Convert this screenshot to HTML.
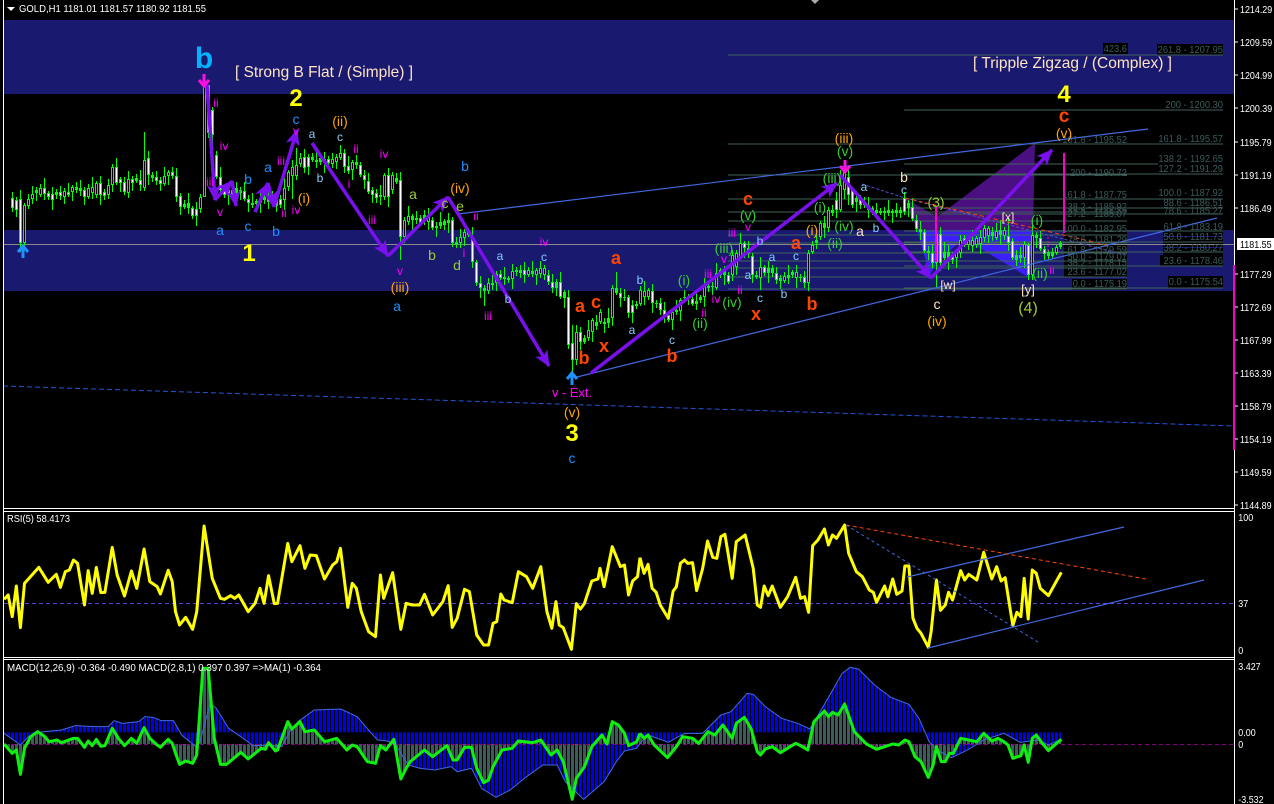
<!DOCTYPE html>
<html><head><meta charset="utf-8"><title>GOLD,H1</title>
<style>
html,body{margin:0;padding:0;background:#000;width:1274px;height:804px;overflow:hidden}
svg{display:block;font-family:"Liberation Sans",Arial,sans-serif}
.m{fill:#f0f;font-size:12px}.l{fill:#87cefa;font-size:12px}.d{fill:#1e90ff;font-size:14px}
.o{fill:#ffa500;font-size:14px}.g{fill:#32cd32;font-size:14px}.y{fill:#9acd32;font-size:14px}
.r{fill:#ff4500;font-size:18px;font-weight:bold}.w{fill:#ffe4c4;font-size:14px}
.Y{fill:#ff0;font-size:24px;font-weight:bold}
.c text{text-anchor:middle}
.ax{fill:#fff;font-size:10.5px}
.f{fill:#3c5c5c;font-size:10.5px;text-anchor:end}
polyline{vector-effect:non-scaling-stroke}
</style></head><body>
<svg width="1274" height="804" viewBox="0 0 1274 804" xmlns="http://www.w3.org/2000/svg">
<defs>
<marker id="ah" markerUnits="userSpaceOnUse" markerWidth="18" markerHeight="16" refX="15" refY="7" orient="auto"><path d="M0 0L16 7L0 14L4 7Z" fill="#7a10ee"/></marker>
<pattern id="pb" patternUnits="userSpaceOnUse" width="4" height="4"><rect x="0" y="0" width="2" height="4" fill="#0000f0"/><rect x="3" y="0" width="1" height="4" fill="#0000f0"/></pattern>
<pattern id="pg" patternUnits="userSpaceOnUse" width="4" height="4"><rect x="0" y="0" width="2" height="4" fill="#3c5c5c"/><rect x="3" y="0" width="1" height="4" fill="#3c5c5c"/></pattern>
<clipPath id="cb">
<polygon transform="translate(0,505) scale(.40816,.33333)" points="10,685 50,720 70,695 92,682 150,675 185,662 230,665 265,665 280,647 300,655 340,650 355,635 375,637 395,647 425,647 445,690 480,725 490,710 515,595 530,610 560,670 590,695 620,722 660,720 690,725 710,680 730,650 770,615 835,612 875,635 910,685 925,705 950,708 970,720 1000,780 1030,790 1065,795 1105,785 1120,800 1155,790 1180,850 1215,877 1250,855 1290,815 1330,780 1365,780 1385,830 1430,883 1480,830 1510,770 1530,738 1560,730 1568,720 1568,682 10,682"/>
<polygon transform="translate(640,505) scale(.40437,.33333)" points="0,715 20,690 70,712 110,685 155,685 200,630 225,620 265,565 280,568 310,605 350,640 390,655 420,672 460,590 500,505 520,487 540,492 580,540 620,577 665,598 690,640 715,710 735,735 770,758 810,735 850,705 900,685 940,712 985,705 1010,720 1042,703 1042,682 0,682"/>
</clipPath>
<clipPath id="cg">
<polygon transform="translate(0,505) scale(.40816,.33333)" points="10,717 30,745 40,735 50,808 60,730 75,695 92,680 110,695 120,710 140,705 150,713 180,700 190,700 207,727 216,708 226,722 236,703 247,724 257,722 275,670 290,700 305,722 322,700 335,715 353,668 367,700 385,720 393,727 412,703 422,715 430,745 440,778 455,768 472,775 482,750 497,490 510,490 525,700 540,778 555,778 590,742 608,762 640,730 650,733 658,713 675,738 680,735 705,650 715,672 735,650 747,680 770,675 795,710 825,700 850,735 863,720 875,725 900,770 920,775 932,722 945,735 965,703 982,822 995,790 1005,770 1040,735 1060,755 1095,722 1110,765 1120,765 1138,727 1155,727 1168,790 1185,833 1197,825 1208,785 1230,735 1255,730 1270,708 1305,713 1325,705 1350,750 1365,735 1380,770 1402,883 1412,820 1432,785 1450,725 1475,690 1487,717 1500,650 1515,660 1530,685 1540,722 1560,710 1568,690 1568,717 10,717"/>
<polygon transform="translate(640,505) scale(.40437,.33333)" points="0,685 10,700 20,690 35,720 68,758 90,725 105,695 130,700 145,715 168,680 185,690 205,660 228,700 238,655 258,637 275,672 290,740 298,750 310,732 327,725 347,743 365,730 385,715 397,722 415,735 430,650 456,618 466,635 476,622 490,630 506,597 530,680 560,717 585,733 605,725 625,717 640,720 655,705 665,710 680,755 695,770 713,817 725,780 733,725 745,770 755,770 765,745 775,745 793,700 813,705 833,710 850,685 870,708 885,700 900,710 910,720 922,760 942,752 950,720 960,772 970,700 980,690 995,715 1010,737 1030,715 1042,703 1042,717 0,717"/>
</clipPath>
</defs>
<rect width="1274" height="804" fill="#000"/>
<!-- zones -->
<rect x="4" y="20" width="1230" height="74" fill="#191970"/>
<rect x="4" y="230" width="1230" height="61" fill="#191970"/>
<!-- purple -->
<polygon points="1035,143 1033,230 917,230 905,198 937,217" fill="#4a0f80"/>
<polygon points="917,230 1033,230 1028,277 978,247 962,240 937,262 930,275" fill="#3b1fff"/>
<!-- label boxes -->
<g fill="#000">
<rect x="1103" y="43" width="25" height="11"/><rect x="1157" y="44" width="66" height="11"/>
<rect x="1163" y="226" width="60" height="10"/><rect x="1163" y="237" width="60" height="10"/><rect x="1163" y="248" width="60" height="10"/><rect x="1160" y="255" width="63" height="11"/><rect x="1168" y="276" width="55" height="12"/>
<rect x="1064" y="230" width="63" height="47"/><rect x="1072" y="279" width="55" height="11"/>
</g>
<!-- fib lines -->
<g stroke="#40625a" stroke-width="1" shape-rendering="crispEdges">
<path d="M728 55H1127M728 144H1127M728 175H1127M728 199H1127M728 212H1127M728 221H1127M728 235H1127M728 243H1127M728 253H1127M728 261H1127M728 268H1127M728 277H1127M728 289H1127"/>
<path d="M904 55H1223M904 110H1223M904 144H1223M904 164H1158M904 174H1223M904 199H1223M904 208H1223M904 214H1223M904 231H1223M904 242H1223M904 252H1223M904 266H1223M904 288H1223"/>
</g>
<path d="M4 244.5H1234" stroke="#8a8a8a" stroke-width="1"/>
<!-- candles: wicks -->
<path fill="none" stroke="#00ff00" stroke-width="1" d="M12.5 192V212M16.5 197V217M20.5 190V252M24.5 203V250M28.5 194V209M32.5 186V204M36.5 187V201M40.5 184V197M44.5 178V200M48.5 191V200M52.5 187V210M56.5 189V199M60.5 186V200M64.5 188V204M68.5 183V197M72.5 185V201M76.5 182V193M80.5 180V196M84.5 187V205M88.5 184V199M92.5 177V199M96.5 181V198M100.5 176V205M104.5 189V200M108.5 179V199M112.5 164V192M116.5 158V185M120.5 177V192M124.5 177V195M128.5 171V198M132.5 176V191M136.5 174V183M140.5 170V191M144.5 132V191M148.5 151V185M152.5 172V182M156.5 171V185M160.5 177V191M164.5 167V186M168.5 170V185M172.5 167V179M176.5 168V202M180.5 193V215M184.5 200V209M188.5 193V214M192.5 206V219M196.5 202V226M200.5 194V213M204.5 85V197M208.5 85V138M212.5 107V172M216.5 151V179M220.5 167V196M224.5 188V198M228.5 183V205M232.5 187V199M236.5 182V197M240.5 187V200M244.5 182V201M248.5 195V212M252.5 193V208M256.5 199V209M260.5 191V213M264.5 194V204M268.5 190V209M272.5 191V206M276.5 197V212M280.5 195V208M284.5 178V210M288.5 170V191M292.5 160V199M296.5 148V180M300.5 153V167M304.5 149V173M308.5 154V175M312.5 153V162M316.5 150V168M320.5 156V165M324.5 152V173M328.5 156V167M332.5 153V168M336.5 154V169M340.5 145V160M344.5 149V173M348.5 156V174M352.5 160V180M356.5 155V169M360.5 162V177M364.5 170V189M368.5 173V194M372.5 187V203M376.5 189V203M380.5 185V205M384.5 173V200M388.5 168V207M392.5 172V194M396.5 173V184M400.5 172V260M404.5 217V243M408.5 206V225M412.5 214V230M416.5 211V224M420.5 215V226M424.5 210V225M428.5 208V230M432.5 217V230M436.5 222V237M440.5 212V229M444.5 219V230M448.5 213V233M452.5 217V247M456.5 237V248M460.5 229V248M464.5 229V246M468.5 228V237M472.5 227V268M476.5 260V286M480.5 276V298M484.5 285V306M488.5 278V294M492.5 275V290M496.5 271V291M500.5 270V280M504.5 267V285M508.5 276V283M512.5 264V289M516.5 267V276M520.5 265V278M524.5 262V283M528.5 267V277M532.5 261V277M536.5 268V285M540.5 261V278M544.5 265V280M548.5 270V285M552.5 274V293M556.5 279V296M560.5 272V299M564.5 290V308M568.5 290V349M572.5 325V375M576.5 325V365M580.5 327V350M584.5 335V344M588.5 320V341M592.5 318V342M596.5 315V330M600.5 309V324M604.5 318V333M608.5 308V328M612.5 285V326M616.5 272V295M620.5 288V307M624.5 289V301M628.5 295V318M632.5 300V323M636.5 301V309M640.5 286V306M644.5 281V305M648.5 288V300M652.5 284V313M656.5 300V308M660.5 298V315M664.5 302V323M668.5 312V322M672.5 308V330M676.5 300V315M680.5 298V321M684.5 290V302M688.5 294V305M692.5 295V306M696.5 291V310M700.5 295V303M704.5 278V307M708.5 283V292M712.5 282V295M716.5 263V290M720.5 268V278M724.5 266V285M728.5 272V284M732.5 250V281M736.5 250V275M740.5 233V259M744.5 241V258M748.5 241V258M752.5 253V283M756.5 271V279M760.5 257V290M764.5 265V276M768.5 261V283M772.5 265V277M776.5 267V284M780.5 275V289M784.5 272V283M788.5 265V284M792.5 270V278M796.5 265V288M800.5 274V282M804.5 271V288M808.5 250V291M812.5 241V254M816.5 230V249M820.5 221V240M824.5 216V238M828.5 207V232M832.5 205V216M836.5 192V218M840.5 170V212M844.5 160V199M848.5 167V205M852.5 188V208M856.5 191V212M860.5 195V209M864.5 197V208M868.5 197V218M872.5 206V215M876.5 203V219M880.5 208V215M884.5 207V220M888.5 200V216M892.5 209V223M896.5 203V217M900.5 207V218M904.5 192V215M908.5 200V217M912.5 198V221M916.5 215V232M920.5 221V240M924.5 229V253M928.5 246V260M932.5 245V268M936.5 207V288M940.5 227V271M944.5 242V260M948.5 245V270M952.5 252V264M956.5 250V268M960.5 235V258M964.5 235V247M968.5 236V250M972.5 230V252M976.5 236V248M980.5 230V254M984.5 225V242M988.5 226V243M992.5 227V241M996.5 223V240M1000.5 220V245M1004.5 227V240M1008.5 218V251M1012.5 238V260M1016.5 250V266M1020.5 247V263M1024.5 241V268M1028.5 243V280M1032.5 225V280M1036.5 232V248M1040.5 231V251M1044.5 246V260M1048.5 250V259M1052.5 248V258M1056.5 245V255M1060.5 241V249"/>
<!-- candles: bodies -->
<path fill="none" stroke="#00ff00" stroke-width="3" d="M12.5 198V208M16.5 200V210M20.5 199V243M24.5 205V243M28.5 199V206M32.5 194V199M36.5 190V193M40.5 188V195M44.5 188V194M48.5 193V197M52.5 194V200M56.5 192V195M60.5 192V196M64.5 191V197M68.5 192V195M72.5 187V192M76.5 187V190M80.5 188V191M84.5 190V197M88.5 188V197M92.5 187V193M96.5 183V195M100.5 183V195M104.5 192V196M108.5 185V195M112.5 167V185M116.5 167V183M120.5 179V183M124.5 182V192M128.5 179V193M132.5 179V183M136.5 178V181M140.5 180V185M144.5 160V188M148.5 158V175M152.5 175V178M156.5 177V181M160.5 180V184M164.5 176V184M168.5 172V176M172.5 172V176M176.5 176V197M180.5 196V207M184.5 204V207M188.5 203V208M192.5 208V216M196.5 209V216M200.5 197V209M204.5 85V197M208.5 85V133M212.5 110V135M216.5 155V177M220.5 177V190M224.5 190V195M228.5 190V195M232.5 190V195M236.5 188V193M240.5 190V193M244.5 191V199M248.5 199V203M252.5 203V205M256.5 201V204M260.5 198V203M264.5 197V200M268.5 195V202M272.5 199V204M276.5 200V206M280.5 199V205M284.5 188V200M288.5 172V187M292.5 167V176M296.5 165V176M300.5 158V164M304.5 157V168M308.5 157V167M312.5 157V160M316.5 160V162M320.5 158V162M324.5 159V163M328.5 159V163M332.5 159V164M336.5 157V162M340.5 153V158M344.5 153V167M348.5 166V171M352.5 162V170M356.5 162V165M360.5 165V175M364.5 175V180M368.5 181V192M372.5 190V195M376.5 193V198M380.5 195V197M384.5 175V197M388.5 175V197M392.5 175V190M396.5 178V182M400.5 180V237M404.5 220V237M408.5 216V222M412.5 216V220M416.5 218V220M420.5 218V224M424.5 215V220M428.5 216V222M432.5 220V228M436.5 226V228M440.5 222V226M444.5 221V225M448.5 220V223M452.5 220V243M456.5 242V245M460.5 237V243M464.5 232V238M468.5 232V235M472.5 237V262M476.5 262V283M480.5 283V288M484.5 288V291M488.5 283V291M492.5 283V285M496.5 274V283M500.5 274V278M504.5 277V279M508.5 278V280M512.5 271V279M516.5 270V272M520.5 270V273M524.5 270V275M528.5 270V275M532.5 271V274M536.5 270V275M540.5 268V274M544.5 268V275M548.5 275V282M552.5 282V288M556.5 282V288M560.5 282V297M564.5 292V298M568.5 297V345M572.5 343V360M576.5 332V360M580.5 332V342M584.5 338V342M588.5 330V338M592.5 320V332M596.5 322V326M600.5 312V322M604.5 322V324M608.5 318V323M612.5 288V318M616.5 288V293M620.5 293V298M624.5 297V298M628.5 297V313M632.5 305V313M636.5 304V306M640.5 290V304M644.5 291V297M648.5 290V297M652.5 291V303M656.5 303V304M660.5 303V310M664.5 310V315M668.5 315V320M672.5 312V320M676.5 310V312M680.5 300V311M684.5 297V298M688.5 297V298M692.5 299V304M696.5 301V304M700.5 297V300M704.5 285V297M708.5 286V288M712.5 286V287M716.5 273V288M720.5 270V275M724.5 271V275M728.5 275V282M732.5 255V275M736.5 253V267M740.5 243V257M744.5 243V248M748.5 248V254M752.5 256V275M756.5 275V277M760.5 267V278M764.5 267V273M768.5 268V273M772.5 268V273M776.5 273V280M780.5 278V281M784.5 276V281M788.5 275V278M792.5 272V275M796.5 272V278M800.5 277V278M804.5 277V283M808.5 253V283M812.5 245V252M816.5 240V243M820.5 223V237M824.5 223V228M828.5 210V228M832.5 210V213M836.5 200V210M840.5 185V210M844.5 170V190M848.5 177V195M852.5 190V205M856.5 198V202M860.5 198V205M864.5 202V205M868.5 205V210M872.5 208V212M876.5 210V213M880.5 211V213M884.5 211V213M888.5 210V213M892.5 211V213M896.5 210V213M900.5 210V213M904.5 198V212M908.5 203V208M912.5 207V219M916.5 220V229M920.5 229V232M924.5 232V251M928.5 251V253M932.5 253V263M936.5 234V263M940.5 234V263M944.5 252V258M948.5 252V260M952.5 255V260M956.5 252V258M960.5 240V253M964.5 238V245M968.5 240V245M972.5 240V246M976.5 238V245M980.5 237V244M984.5 228V238M988.5 228V236M992.5 232V236M996.5 231V238M1000.5 230V235M1004.5 230V236M1008.5 236V243M1012.5 241V258M1016.5 255V260M1020.5 255V258M1024.5 244V258M1028.5 245V275M1032.5 235V275M1036.5 235V238M1040.5 238V249M1044.5 249V254M1048.5 252V256M1052.5 252V256M1056.5 247V253M1060.5 243V247"/>
<!-- candles: white interiors -->
<path fill="none" stroke="#fff" stroke-width="1" d="M12.5 199V207M16.5 201V209M20.5 200V242M44.5 189V193M48.5 194V196M52.5 195V199M60.5 193V195M68.5 193V194M84.5 191V196M100.5 184V194M104.5 193V195M116.5 168V182M120.5 180V182M124.5 183V191M132.5 180V182M140.5 181V184M148.5 159V174M156.5 178V180M160.5 181V183M172.5 173V175M176.5 177V196M180.5 197V206M192.5 209V215M196.5 210V215M208.5 86V132M212.5 111V134M216.5 156V176M220.5 178V189M224.5 191V194M228.5 191V194M232.5 191V194M244.5 192V198M248.5 200V202M268.5 196V201M276.5 201V205M280.5 200V204M304.5 158V167M308.5 158V166M324.5 160V162M328.5 160V162M344.5 154V166M348.5 167V170M360.5 166V174M364.5 176V179M368.5 182V191M372.5 191V194M376.5 194V197M388.5 176V196M400.5 181V236M420.5 219V223M432.5 221V227M452.5 221V242M472.5 238V261M476.5 263V282M480.5 284V287M500.5 275V277M524.5 271V274M548.5 276V281M552.5 283V287M560.5 283V296M568.5 298V344M572.5 344V359M580.5 333V341M620.5 294V297M628.5 298V312M632.5 306V312M652.5 292V302M660.5 304V309M664.5 311V314M668.5 316V319M692.5 300V303M720.5 271V274M728.5 276V281M744.5 244V247M748.5 249V253M752.5 257V274M764.5 268V272M776.5 274V279M804.5 278V282M836.5 201V209M848.5 178V194M852.5 191V204M860.5 199V204M868.5 206V209M904.5 199V211M912.5 208V218M916.5 221V228M924.5 233V250M932.5 254V262M940.5 235V262M952.5 256V259M964.5 239V244M1008.5 237V242M1012.5 242V257M1028.5 246V274M1040.5 239V248M1044.5 250V253"/>
<!-- candles: black interiors -->
<path fill="none" stroke="#000" stroke-width="1" d="M24.5 206V242M28.5 200V205M32.5 195V198M40.5 189V194M64.5 192V196M72.5 188V191M88.5 189V196M92.5 188V192M96.5 184V194M108.5 186V194M112.5 168V184M128.5 180V192M144.5 161V187M164.5 177V183M168.5 173V175M200.5 198V208M204.5 86V196M284.5 189V199M288.5 173V186M292.5 168V175M296.5 166V175M300.5 159V163M332.5 160V163M336.5 158V161M340.5 154V157M352.5 163V169M384.5 176V196M392.5 176V189M404.5 221V236M408.5 217V221M428.5 217V221M460.5 238V242M464.5 233V237M488.5 284V290M496.5 275V282M512.5 272V278M528.5 271V274M536.5 271V274M540.5 269V273M544.5 269V274M576.5 333V359M588.5 331V337M592.5 321V331M600.5 313V321M612.5 289V317M640.5 291V303M644.5 292V296M648.5 291V296M672.5 313V319M680.5 301V310M704.5 286V296M716.5 274V287M732.5 256V274M736.5 254V266M740.5 244V256M760.5 268V277M784.5 277V280M796.5 273V277M808.5 254V282M812.5 246V251M820.5 224V236M828.5 211V227M840.5 186V209M844.5 171V189M956.5 253V257M936.5 235V262M960.5 241V252M968.5 241V244M972.5 241V245M976.5 239V244M980.5 238V243M984.5 229V237M988.5 229V235M996.5 232V237M1004.5 231V235M1024.5 245V257M1032.5 236V274M1056.5 248V252"/>
<!-- magenta verticals -->
<path d="M936 207V262" stroke="#ff00cc" stroke-width="2"/>
<path d="M1064 153V233" stroke="#ff00cc" stroke-width="2"/>
<path d="M1048 237V252" stroke="#ff00cc" stroke-width="1" stroke-dasharray="2 2"/>
<!-- trend -->
<g fill="none">
<path d="M458 214L1148 129M577 377L1217 218" stroke="#4169e1" stroke-width="1.2"/>
<path d="M3 386L1234 426" stroke="#2255dd" stroke-width="1" stroke-dasharray="5 3"/>
<path d="M862 184L905 198L1125 255" stroke="#5a50d0" stroke-width="1" stroke-dasharray="3 2"/>
<path d="M905 198L1106 245" stroke="#ff4500" stroke-width="1" stroke-dasharray="4 3"/>
</g>
<!-- purple arrows -->
<g fill="none" stroke="#7a10ee" stroke-width="3.5">
<path d="M207 85L215 200" marker-end="url(#ah)"/>
<path d="M215 200L232 181" marker-end="url(#ah)"/>
<path d="M232 181L236 206" marker-end="url(#ah)"/>
<path d="M255 212L268 183" marker-end="url(#ah)"/>
<path d="M268 183L274 207" marker-end="url(#ah)"/>
<path d="M274 207L297 130" marker-end="url(#ah)"/>
<path d="M312 143L388 256" marker-end="url(#ah)"/>
<path d="M388 256L448 197" marker-end="url(#ah)"/>
<path d="M448 197L549 366" marker-end="url(#ah)"/>
<path d="M591 373L837 183" marker-end="url(#ah)"/>
<path d="M840 175L931 278" marker-end="url(#ah)"/>
<path d="M931 278L1052 150" marker-end="url(#ah)"/>
</g>
<!-- small arrows -->
<g stroke="#1e90ff" stroke-width="3" fill="none"><path d="M23 258V246M18 252L23 246L28 252"/><path d="M572 385V373M567 379L572 373L577 379"/></g>
<g stroke="#ff10e0" stroke-width="3" fill="none"><path d="M204 74V85M199 80L204 86L209 80"/><path d="M845 160V172M840 166L845 172L850 166"/></g>
<!-- header -->
<path d="M7 7H15L11 11Z" fill="#fff"/>
<text x="19" y="12" fill="#fff" font-size="10.5" textLength="187" lengthAdjust="spacingAndGlyphs">GOLD,H1  1181.01 1181.57 1180.92 1181.55</text>
<path d="M811 0H819L815 4Z" fill="#aaa"/>
<text x="235" y="77" class="w" style="font-size:16px" textLength="178" lengthAdjust="spacingAndGlyphs">[ Strong B Flat / (Simple) ]</text>
<text x="973" y="68" class="w" style="font-size:16px" textLength="199" lengthAdjust="spacingAndGlyphs">[ Tripple Zigzag / (Complex) ]</text>
<!-- fib labels -->
<g class="f" transform="translate(1223,0) scale(.89,1)">
<text y="53">261.8 - 1207.95</text>
<text y="108">200 - 1200.30</text><text y="142">161.8 - 1195.57</text>
<text y="162">138.2 - 1192.65</text><text y="172">127.2 - 1191.29</text>
<text y="196">100.0 - 1187.92</text><text y="206">88.6 - 1186.51</text><text y="214">78.6 - 1185.27</text>
<text y="230">61.8 - 1183.19</text><text y="240">50.0 - 1181.73</text><text y="251">38.2 - 1180.27</text><text y="264">23.6 - 1178.46</text><text y="285">0.0 - 1175.54</text>
</g>
<g class="f" transform="translate(1127,0) scale(.89,1)">
<text y="52">423.6</text>
<text y="143">161.8 - 1195.52</text><text y="176">200 - 1190.72</text><text y="198">161.8 - 1187.75</text><text y="210">38.2 - 1185.92</text><text y="217">27.2 - 1185.07</text>
<text y="232">100.0 - 1182.95</text><text y="243">78.6 - 1181.29</text><text y="253">61.8 - 1179.59</text><text y="260">50.0 - 1179.07</text><text y="266">38.2 - 1178.15</text><text y="275">23.6 - 1177.02</text><text y="287">0.0 - 1175.19</text>
</g>
<!-- wave labels -->
<g class="c">
<text x="204" y="68" fill="#00b4ff" font-size="30" font-weight="bold">b</text>
<text x="296" y="106" class="Y">2</text><text x="249" y="261" class="Y">1</text><text x="572" y="441" class="Y">3</text><text x="1064" y="102" class="Y">4</text>
<text x="1064" y="122" class="r" style="font-size:19px">c</text>
<text x="216" y="107" class="m">ii</text><text x="224" y="150" class="m">iv</text><text x="210" y="186" class="m">iii</text><text x="220" y="216" class="m">v</text>
<text x="220" y="235" class="d">a</text><text x="248" y="184" class="d">b</text><text x="248" y="231" class="d">c</text><text x="268" y="172" class="d">a</text><text x="276" y="236" class="d">b</text><text x="296" y="124" class="d">c</text>
<text x="281" y="165" class="m">iii</text><text x="296" y="135" class="m">v</text><text x="296" y="214" class="m">iv</text><text x="284" y="217" class="m">ii</text>
<text x="304" y="203" class="o">(i)</text><text x="312" y="138" class="l">a</text><text x="340" y="126" class="o">(ii)</text><text x="340" y="141" class="l">c</text>
<text x="356" y="153" class="m">ii</text><text x="320" y="182" class="l">b</text><text x="384" y="158" class="m">iv</text><text x="349" y="188" class="m">i</text><text x="372" y="224" class="m">iii</text><text x="400" y="275" class="m">v</text>
<text x="400" y="292" class="o">(iii)</text><text x="413" y="199" class="y">a</text><text x="397" y="311" class="d">a</text>
<text x="460" y="193" class="o">(iv)</text><text x="460" y="211" class="y">e</text><text x="445" y="208" class="y">c</text><text x="465" y="171" class="d">b</text><text x="476" y="220" class="m">ii</text>
<text x="432" y="260" class="y">b</text><text x="457" y="270" class="y">d</text><text x="464" y="257" class="m">i</text><text x="500" y="260" class="l">a</text>
<text x="544" y="246" class="m">iv</text><text x="544" y="261" class="l">c</text><text x="508" y="303" class="l">b</text><text x="488" y="320" class="m">iii</text>
<text x="580" y="312" class="r">a</text><text x="596" y="308" class="r">c</text><text x="616" y="264" class="r">a</text><text x="584" y="364" class="r">b</text><text x="604" y="352" class="r">x</text>
<text x="640" y="284" class="l">b</text><text x="632" y="334" class="l">a</text><text x="672" y="344" class="l">c</text><text x="672" y="362" class="r">b</text><text x="756" y="320" class="r">x</text><text x="812" y="310" class="r">b</text><text x="796" y="249" class="r">a</text><text x="796" y="260" class="l">c</text><text x="748" y="205" class="r">c</text>
<text x="748" y="220" class="g">(v)</text><text x="748" y="231" class="m">v</text><text x="724" y="253" class="g">(iii)</text><text x="732" y="237" class="m">iii</text><text x="724" y="263" class="m">v</text><text x="708" y="278" class="m">iii</text><text x="684" y="285" class="g">(i)</text><text x="716" y="303" class="m">iv</text><text x="732" y="307" class="g">(iv)</text><text x="704" y="317" class="m">ii</text><text x="700" y="328" class="g">(ii)</text><text x="740" y="294" class="m">ii</text>
<text x="748" y="279" class="l">a</text><text x="760" y="302" class="l">c</text><text x="772" y="261" class="l">a</text><text x="784" y="298" class="l">b</text><text x="760" y="245" class="l">b</text>
<text x="812" y="235" class="o">(i)</text><text x="820" y="212" class="g">(i)</text><text x="835" y="248" class="g">(ii)</text>
<text x="844" y="143" class="o">(iii)</text><text x="845" y="156" class="g">(v)</text><text x="832" y="183" class="g">(iii)</text><text x="864" y="191" class="l">a</text><text x="844" y="231" class="g">(iv)</text><text x="860" y="236" class="w">a</text><text x="876" y="232" class="l">b</text>
<text x="904" y="182" class="w">b</text><text x="904" y="194" class="l">c</text><text x="936" y="207" class="y">(3)</text><text x="1008" y="221" class="w" style="font-size:12px">[x]</text><text x="1037" y="225" class="g">(i)</text>
<text x="948" y="289" class="w" style="font-size:12px">[w]</text><text x="937" y="309" class="w">c</text><text x="937" y="326" class="o">(iv)</text><text x="1028" y="294" class="w" style="font-size:13px">[y]</text><text x="1028" y="313" class="y" style="font-size:16px">(4)</text>
<text x="1040" y="278" class="g">(ii)</text><text x="1052" y="274" class="m">ii</text><text x="1064" y="138" class="o">(v)</text>
<text x="572" y="397" class="m" style="font-size:13px" textLength="40">v - Ext.</text><text x="572" y="417" class="o">(v)</text><text x="572" y="463" class="d">c</text>
</g>
<!-- MACD histograms -->
<g clip-path="url(#cb)"><rect x="4" y="660" width="1060" height="144" fill="url(#pb)"/></g>
<g clip-path="url(#cg)"><rect x="4" y="660" width="1060" height="144" fill="url(#pg)"/></g>
<!-- RSI / MACD lines -->
<path d="M4 603.5H1234" stroke="#5a3fe0" stroke-dasharray="4 3"/>
<path d="M4 744.5H1234" stroke="#800080" stroke-dasharray="4 3"/>
<g fill="none" transform="translate(0,505) scale(.40816,.33333)">
<polyline stroke="#ffff00" stroke-width="3" stroke-linejoin="round" points="10,283 20,270 30,335 40,243 50,368 60,235 95,187 118,232 138,208 148,247 160,200 170,195 180,165 190,175 207,300 216,197 226,265 236,187 247,263 257,262 275,127 287,210 305,273 322,198 335,250 353,132 367,230 385,245 393,267 412,196 422,230 430,320 440,360 455,337 472,373 482,320 500,63 520,220 540,280 550,283 565,272 575,280 585,270 608,320 625,295 637,250 647,295 658,212 672,296 680,295 705,115 715,170 735,122 747,190 760,150 775,152 795,222 815,180 825,170 834,130 852,307 863,235 873,250 885,320 903,380 920,395 932,210 940,280 962,203 982,373 995,295 1010,300 1028,300 1040,268 1060,330 1085,290 1098,242 1108,367 1120,340 1138,253 1150,260 1168,390 1185,420 1197,420 1208,355 1217,350 1227,267 1235,285 1255,293 1270,200 1290,215 1305,250 1325,185 1340,320 1352,370 1362,290 1370,360 1380,368 1400,433 1412,296 1422,312 1432,295 1450,228 1465,222 1470,190 1480,245 1500,125 1520,185 1530,180 1540,270 1550,228 1562,215 1568,158"/>
<polyline stroke="#4169e1" stroke-width="1" points="10,685 50,720 70,695 92,682 150,675 185,662 230,665 265,665 280,647 300,655 340,650 355,635 375,637 395,647 425,647 445,690 480,725 490,710 515,595 530,610 560,670 590,695 620,722 660,720 690,725 710,680 730,650 770,615 835,612 875,635 910,685 925,705 950,708 970,720 1000,780 1030,790 1065,795 1105,785 1120,800 1155,790 1180,850 1215,877 1250,855 1290,815 1330,780 1365,780 1385,830 1430,883 1480,830 1510,770 1530,738 1560,730 1568,715"/>
<polyline stroke="#10f010" stroke-width="3" stroke-linejoin="round" points="10,717 30,745 40,735 50,808 60,730 75,695 92,680 110,695 120,710 140,705 150,713 180,700 190,700 207,727 216,708 226,722 236,703 247,724 257,722 275,670 290,700 305,722 322,700 335,715 353,668 367,700 385,720 393,727 412,703 422,715 430,745 440,778 455,768 472,775 482,750 497,490 510,490 525,700 540,778 555,778 590,742 608,762 640,730 650,733 658,713 675,738 680,735 705,650 715,672 735,650 747,680 770,675 795,710 825,700 850,735 863,720 875,725 900,770 920,775 932,722 945,735 965,703 982,822 995,790 1005,770 1040,735 1060,755 1095,722 1110,765 1120,765 1138,727 1155,727 1168,790 1185,833 1197,825 1208,785 1230,735 1255,730 1270,708 1305,713 1325,705 1350,750 1365,735 1380,770 1402,883 1412,820 1432,785 1450,725 1475,690 1487,717 1500,650 1515,660 1530,685 1540,722 1560,710 1568,685"/>
</g>
<g fill="none" transform="translate(640,505) scale(.40437,.33333)">
<polyline stroke="#ffff00" stroke-width="3" stroke-linejoin="round" points="0,158 10,205 20,178 30,250 40,262 50,300 70,340 82,258 90,245 100,175 110,165 118,175 130,173 140,257 155,190 167,108 180,157 190,160 200,95 210,88 228,220 238,110 260,90 280,190 290,300 298,307 307,243 317,272 327,243 347,307 365,275 385,217 397,280 407,275 417,322 427,122 440,105 456,72 466,120 476,90 486,100 506,60 516,145 535,200 550,215 567,255 577,262 585,292 605,243 613,275 625,222 635,268 648,258 655,183 665,183 675,340 685,370 695,385 713,427 720,380 733,225 743,316 755,300 763,262 773,285 793,197 803,225 813,208 833,225 850,142 870,222 882,185 893,228 903,218 922,362 932,322 942,335 950,220 960,342 970,195 980,205 990,250 1010,272 1030,228 1042,202"/>
<polyline stroke="#4169e1" stroke-width="1" points="0,715 20,690 70,712 110,685 155,685 200,630 225,620 265,565 280,568 310,605 350,640 390,655 420,672 460,590 500,505 520,487 540,492 580,540 620,577 665,598 690,640 715,710 735,735 770,758 810,735 850,705 900,685 940,712 985,705 1010,720 1042,703"/>
<polyline stroke="#10f010" stroke-width="3" stroke-linejoin="round" points="0,685 10,700 20,690 35,720 68,758 90,725 105,695 130,700 145,715 168,680 185,690 205,660 228,700 238,655 258,637 275,672 290,740 298,750 310,732 327,725 347,743 365,730 385,715 397,722 415,735 430,650 456,618 466,635 476,622 490,630 506,597 530,680 560,717 585,733 605,725 625,717 640,720 655,705 665,710 680,755 695,770 713,817 725,780 733,725 745,770 755,770 765,745 775,745 793,700 813,705 833,710 850,685 870,708 885,700 900,710 910,720 922,760 942,752 950,720 960,772 970,700 980,690 995,715 1010,737 1030,715 1042,703"/>
</g>
<g fill="none">
<path d="M907 577L1124 527M928 648L1204 580" stroke="#4169e1" stroke-width="1.2"/>
<path d="M846 525L1146 579" stroke="#ff4500" stroke-dasharray="4 3"/>
<path d="M846 525L1038 642" stroke="#4169e1" stroke-dasharray="3 3"/>
</g>
<text x="7" y="522" fill="#fff" font-size="10.5" textLength="63" lengthAdjust="spacingAndGlyphs">RSI(5) 58.4173</text>
<text x="7" y="671" fill="#fff" font-size="10.5" textLength="314" lengthAdjust="spacingAndGlyphs">MACD(12,26,9) -0.364 -0.490  MACD(2,8,1) 0.397 0.397  =&gt;MA(1) -0.364</text>
<!-- frames -->
<g fill="#fff" shape-rendering="crispEdges">
<rect x="3" y="0" width="1" height="804"/>
<rect x="1234" y="0" width="1" height="804"/>
<rect x="3" y="508" width="1232" height="1"/><rect x="3" y="511" width="1232" height="1"/>
<rect x="3" y="657" width="1232" height="1"/><rect x="3" y="659" width="1232" height="1"/>
</g>
<rect x="1233" y="265" width="2" height="185" fill="#ff00cc"/>
<!-- axis -->
<g class="ax" transform="translate(1240,0) scale(.85,1)">
<text y="13">1214.29</text><text y="46">1209.59</text><text y="79">1204.99</text><text y="112">1200.39</text><text y="146">1195.79</text><text y="179">1191.19</text><text y="212">1186.49</text>
<text y="278">1177.29</text><text y="311">1172.69</text><text y="344">1167.99</text><text y="377">1163.39</text><text y="410">1158.79</text><text y="443">1154.19</text><text y="476">1149.59</text><text y="509">1144.89</text>
<text x="-2" y="521">100</text><text x="-2" y="607">37</text><text x="-2" y="654">0</text>
<text x="-2" y="670">3.427</text><text x="-2" y="736">0.00</text><text x="-2" y="748">0</text><text x="-2" y="803">-3.532</text>
</g>
<path d="M1235 9H1238M1235 42H1238M1235 75H1238M1235 108H1238M1235 142H1238M1235 175H1238M1235 208H1238M1235 274H1238M1235 307H1238M1235 340H1238M1235 373H1238M1235 406H1238M1235 439H1238M1235 472H1238M1235 505H1238" stroke="#fff"/>
<rect x="1237" y="238" width="37" height="12" fill="#fff"/>
<text transform="translate(1240,248) scale(.85,1)" fill="#000" font-size="10.5">1181.55</text>
</svg>
</body></html>
